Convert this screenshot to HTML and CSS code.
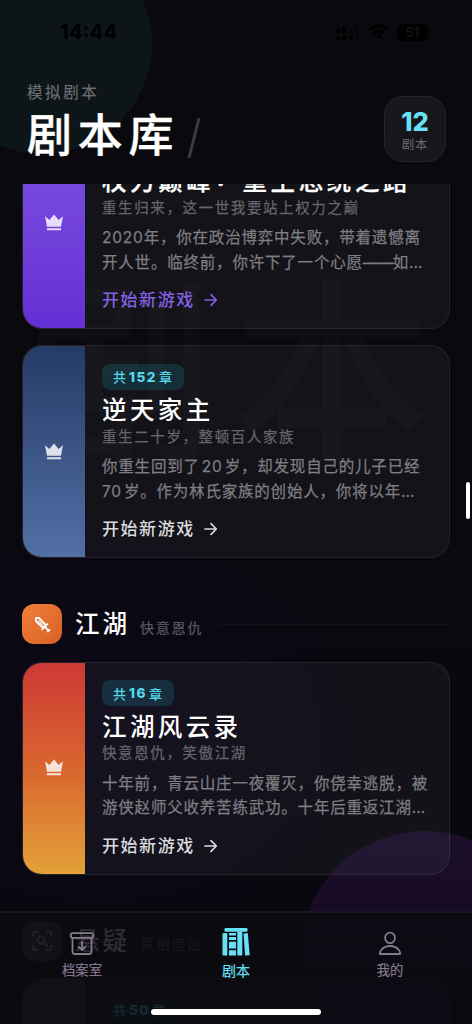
FILE: index.html
```html
<!DOCTYPE html>
<html lang="zh-CN">
<head>
<meta charset="utf-8">
<meta name="viewport" content="width=device-width, initial-scale=1">
<title>剧本库</title>
<link rel="stylesheet" href="styles.css">
</head>
<body>
<svg class="sprite" aria-hidden="true">
  <symbol id="crown" viewBox="0 0 20 18"><path d="M1 2.2 5.4 6.1 10 .6l4.6 5.5L19 2.2 17 12.7H3zM3 14.3h14v2H3z" fill="currentColor"/></symbol>
  <symbol id="arrow" viewBox="0 0 14 14"><path d="M1 7h11M7 1.7 12.3 7 7 12.3" fill="none" stroke="currentColor" stroke-width="1.7" stroke-linecap="round" stroke-linejoin="round"/></symbol>
</svg>
<div class="screen">
  <div class="orb orb-teal"></div>
  <div class="orb orb-purple"></div>
  <div class="watermark">剧本</div>

  <div class="statusbar">
    <span class="clock">14:44</span>
    <div class="status-icons">
      <svg class="signal" viewBox="0 0 28 16"><g fill="#000"><rect x="3" y="5" width="4" height="4"/><rect x="9" y="3" width="4" height="6"/><rect x="3" y="12" width="4" height="4"/><rect x="9" y="12" width="4" height="4"/><rect x="16" y="12" width="4" height="4"/><rect x="22" y="12" width="3" height="4" opacity=".35"/><rect x="16" y="4" width="3" height="6" opacity=".35"/><rect x="22" y="1" width="3" height="9" opacity=".35"/></g></svg>
      <svg class="wifi" viewBox="0 0 20 16"><g fill="none" stroke="#000" stroke-width="2.6"><path d="M1 5.5Q10-2.4 19 5.5M4.5 9.3Q10 4.5 15.5 9.3"/></g><path d="M7 11.7Q10 9.5 13 11.7L10 15z" fill="#000"/></svg>
      <span class="battery">51</span>
    </div>
  </div>

  <header class="header">
    <div class="heading">
      <div class="eyebrow">模拟剧本</div>
      <h1 class="page-title">剧本库<svg class="slash" viewBox="0 0 14 42"><path d="M12 1 2 41" stroke="#3b3b40" stroke-width="3"/></svg></h1>
    </div>
    <div class="counter"><b class="counter-num">12</b><span class="counter-label">剧本</span></div>
  </header>

  <main class="list">
    <article class="card card-first">
      <div class="spine spine-violet"><svg class="crown"><use href="#crown"/></svg></div>
      <div class="body">
        <h2 class="title">权力巅峰<span class="colon">：</span>重生总统之路</h2>
        <p class="subtitle">重生归来，这一世我要站上权力之巅</p>
        <p class="desc"><span>2020年，你在政治博弈中失败，带着遗憾离</span><span>开人世。临终前，你许下了一个心愿<b class="dash">——</b>如…</span></p>
        <div class="cta cta-violet">开始新游戏<svg class="arrow"><use href="#arrow"/></svg></div>
      </div>
    </article>

    <article class="card">
      <div class="spine spine-blue"><svg class="crown"><use href="#crown"/></svg></div>
      <div class="body">
        <span class="badge">共<b>152</b>章</span>
        <h2 class="title">逆天家主</h2>
        <p class="subtitle">重生二十岁，整顿百人家族</p>
        <p class="desc"><span>你重生回到了<i class="num">20</i>岁，却发现自己的儿子已经</span><span><i class="num num-start">70</i>岁。作为林氏家族的创始人，你将以年…</span></p>
        <div class="cta">开始新游戏<svg class="arrow"><use href="#arrow"/></svg></div>
      </div>
    </article>

    <div class="section">
      <span class="section-icon sword"><svg viewBox="0 0 20 20" class="glyph"><path d="M2.4 2.4h3.8l7.6 8-3.4 3.4-8-7.6z" fill="none" stroke="#fff" stroke-width="2.2" stroke-linejoin="round"/><path d="m5.5 5.5 5 5" stroke="#fff" stroke-width="1.5"/><path d="m9 16.4 7.4-7.4M13.4 13.4l3.8 3.8" stroke="#fff" stroke-width="2.2"/><path d="m18.8 15.6-3.2 3.2" stroke="#fff" stroke-width="2.2"/></svg></span>
      <h3 class="section-title">江湖</h3>
      <span class="section-note">快意恩仇</span>
      <span class="rule"></span>
    </div>

    <article class="card">
      <div class="spine spine-fire"><svg class="crown"><use href="#crown"/></svg></div>
      <div class="body">
        <span class="badge">共<b>16</b>章</span>
        <h2 class="title">江湖风云录</h2>
        <p class="subtitle">快意恩仇，笑傲江湖</p>
        <p class="desc"><span>十年前，青云山庄一夜覆灭，你侥幸逃脱，被</span><span>游侠赵师父收养苦练武功。十年后重返江湖…</span></p>
        <div class="cta">开始新游戏<svg class="arrow"><use href="#arrow"/></svg></div>
      </div>
    </article>

    <div class="section section-last">
      <span class="section-icon scan"><svg viewBox="0 0 20 20" class="glyph-scan"><path d="M1 6V3q0-2 2-2h3M14 1h3q2 0 2 2v3M19 14v3q0 2-2 2h-3M6 19H3q-2 0-2-2v-3M11.5 11.5l4 4" fill="none" stroke="#aaa" stroke-width="2"/><circle cx="9" cy="9" r="3.4" fill="none" stroke="#aaa" stroke-width="2"/></svg></span>
      <h3 class="section-title">悬疑</h3>
      <span class="section-note">真相追凶</span>
      <span class="rule"></span>
    </div>

    <article class="card">
      <div class="spine spine-grey"></div>
      <div class="body"><span class="badge">共<b>50</b>章</span></div>
    </article>
  </main>

  <i class="scroll-thumb"></i>

  <nav class="tabbar">
    <a class="tab">
      <svg class="tab-icon" viewBox="0 0 28 28"><g fill="none" stroke="currentColor" stroke-width="1.8" stroke-linecap="round" stroke-linejoin="round"><rect x="2.8" y="3.2" width="22.4" height="4.6" rx="1.5"/><path d="M4.5 8V21.5q0 2.5 2.5 2.5h14q2.5 0 2.5-2.5V8M14 12v8M10.5 16.8 14 20.2l3.5-3.4"/></g></svg>
      <span>档案室</span>
    </a>
    <a class="tab tab-active">
      <svg class="tab-icon books" viewBox="0 0 30 30"><g fill="currentColor"><rect x="3.5" y="1" width="23" height="3.8" rx="1"/><rect x="1.5" y="6" width="4.8" height="22.5" rx="1"/><path d="M8 6h7v2.4H8zM8 10h7v3H8zM8 14.8h7v6.7H8zM8 23.3h7v5.2H8z"/><rect x="16.3" y="4.5" width="5" height="24" rx=".7"/><path d="m22.5 6.7 4.3-.7 1.9 22.2-4.6.4z"/></g></svg>
      <span>剧本</span>
    </a>
    <a class="tab">
      <svg class="tab-icon" viewBox="0 0 28 28"><g fill="none" stroke="currentColor" stroke-width="1.8" stroke-linejoin="round"><ellipse cx="14" cy="7.9" rx="4.9" ry="5.3"/><path d="M3.8 24h20.4q.3-2-1.8-4.5Q19 16 14 16t-8.4 3.5Q3.5 22 3.8 24z"/></g></svg>
      <span>我的</span>
    </a>
  </nav>
  <i class="home-indicator"></i>
</div>
</body>
</html>
```
FILE: styles.css
```css
* { box-sizing: border-box; margin: 0; padding: 0; }
body {
  background: #09090e;
  font-family: Inter, "Noto Sans CJK SC", sans-serif;
  text-autospace: no-autospace;
}
i { font-style: normal; }
.sprite { display: none; }
.screen {
  position: relative;
  width: 472px;
  height: 1024px;
  overflow: hidden;
  display: flex;
  flex-direction: column;
  color: #fff;
  white-space: nowrap;
  background: radial-gradient(ellipse 330px 260px at 100px 730px, #0c0817, transparent), linear-gradient(#09090e, #08080e);
}

/* decorative backdrop */
.orb { position: absolute; border-radius: 50%; }
.orb-teal { left: -68px; top: -66px; width: 220px; height: 220px; background: #0d1518; }
.orb-purple { left: 300px; top: 831px; width: 250px; height: 250px; background: linear-gradient(#1a0e2a, #160922 60%); }
.watermark {
  position: absolute;
  left: 17px;
  top: 229px;
  font-size: 198px;
  line-height: 290px;
  letter-spacing: 18px;
  font-weight: 500;
  color: rgba(255, 255, 255, .02);
}

/* status bar */
.statusbar {
  position: relative;
  height: 64px;
  padding: 20px 41px 0 60px;
  display: flex;
  justify-content: space-between;
  color: #000;
}
.clock { font-size: 20.5px; line-height: 24px; font-weight: 700; }
.status-icons { display: flex; align-items: center; gap: 8px; height: 24px; }
.signal { width: 28px; height: 16px; }
.wifi { width: 20px; height: 16px; }
.battery {
  width: 31px;
  height: 17px;
  margin-right: 3px;
  border-radius: 6px;
  background: #000;
  color: #131318;
  font-size: 13px;
  line-height: 17px;
  font-weight: 700;
  text-align: center;
}

/* page header */
.header {
  position: relative;
  height: 120px;
  padding: 18px 26px 0 27px;
  display: flex;
  justify-content: space-between;
}
.eyebrow { font-size: 15.5px; line-height: 22px; letter-spacing: 2.6px; color: #6c6f72; -webkit-text-stroke: .2px #6c6f72; }
.page-title {
  display: flex;
  align-items: center;
  font-size: 45px;
  line-height: 63px;
  letter-spacing: 5.8px;
  font-weight: 500;
  -webkit-text-stroke: .4px #fff;
}
.slash { width: 14px; height: 42px; margin: 5px 0 0 8px; }
.counter {
  width: 62px;
  height: 66px;
  margin-top: 14px;
  padding-top: 12px;
  border: 1px solid #25252b;
  border-radius: 19px;
  background: #16161b;
  text-align: center;
}
.counter-num { display: block; font-size: 25.5px; line-height: 26px; font-weight: 800; color: #67e3f9; }
.counter-label { display: block; font-size: 12.5px; line-height: 20px; letter-spacing: .8px; color: #6b6b70; }

/* script list, scrolled part-way through the first card */
.list { position: relative; flex: 1; overflow: hidden; padding: 0 22px; }
.card {
  position: relative;
  height: 213px;
  display: flex;
  overflow: hidden;
  border: 1px solid rgba(255, 255, 255, .07);
  border-radius: 20px;
  background: rgba(255, 255, 255, .045);
}
.card-first { margin: -67.7px 0 16px; }
.card-first .body { padding-top: 44.8px; }
.spine { width: 62px; flex: none; display: flex; align-items: center; justify-content: center; color: rgba(255, 255, 255, .82); }
.spine-violet { background: linear-gradient(#8054e2, #6430d4); }
.spine-blue { background: linear-gradient(#253b66, #526fa6); }
.spine-fire { background: linear-gradient(#cd3935, #d9662f 50%, #e3a138); }
.spine-grey { background: #34343a; }
.crown { width: 20px; height: 18px; }
.body { padding: 17.5px 0 0 17px; }
.badge {
  display: flex;
  align-items: center;
  width: max-content;
  height: 26px;
  padding: 0 11px;
  border-radius: 8px;
  background: rgba(34, 211, 238, .145);
  color: #57d9ee;
  font-size: 13px;
  font-weight: 500;
  letter-spacing: 1px;
}
.badge b { margin: 0 2px 0 2px; font-size: 13.5px; font-weight: 800; letter-spacing: 1.5px; }
.title { margin-top: 1.6px; font-size: 24.5px; line-height: 38px; letter-spacing: 3.4px; font-weight: 500; }
.card-first .title { margin-top: 0; letter-spacing: 3.6px; -webkit-text-stroke: .3px #fff; }
.colon { position: relative; top: -4px; }
.subtitle { margin-top: -3.5px; font-size: 14.5px; line-height: 22px; letter-spacing: 1.6px; color: #65656b; -webkit-text-stroke: .25px #65656b; }
.desc { margin-top: 7.5px; font-size: 15.5px; line-height: 24.5px; letter-spacing: .8px; color: #7e7e83; -webkit-text-stroke: .25px #7e7e83; }
.desc span { display: block; }
.dash { font-weight: 400; letter-spacing: 0; margin-right: -1px; }
.num { margin: 0 2px; }
.num-start { margin-left: 0; }
.cta { display: flex; align-items: center; margin-top: 12px; font-size: 17px; line-height: 26px; letter-spacing: 1.55px; font-weight: 500; color: #dadadd; }
.cta-violet { color: #8460e0; }
.arrow { width: 14px; height: 14px; margin-left: 9px; }

/* genre heading */
.section { display: flex; align-items: center; height: 40px; margin: 46px 0 17.5px; }
.section-icon { width: 40px; height: 40px; flex: none; border-radius: 12px; display: flex; align-items: center; justify-content: center; }
.sword { background: linear-gradient(135deg, #f0803a, #d95f24); }
.scan { background: #334148; }
.glyph { width: 17px; height: 17px; }
.glyph-scan { width: 20px; height: 20px; }
.section-title { margin-left: 13px; font-size: 24.5px; line-height: 36px; letter-spacing: 3px; font-weight: 500; }
.section-note { margin: 7px 0 0 10px; font-size: 14px; line-height: 20px; letter-spacing: 1.8px; color: #5c5a63; -webkit-text-stroke: .2px #5c5a63; }
.rule { flex: 1; height: 1px; margin: 1px 0 0 15px; background: #131219; }

.scroll-thumb { position: absolute; right: 2px; top: 482px; width: 4px; height: 37px; border-radius: 2px; background: #fff; }

/* bottom navigation overlays the list */
.tabbar {
  position: absolute;
  left: 0;
  bottom: 0;
  width: 472px;
  height: 113px;
  padding: 17px 5px 0;
  display: grid;
  grid-template-columns: repeat(3, 1fr);
  border-top: 2px solid #19181f;
  background: rgba(10, 10, 15, .86);
}
.tab { display: flex; flex-direction: column; align-items: center; color: #85798f; font-size: 13.3px; line-height: 20px; -webkit-text-stroke: .2px currentColor; }
.tab-icon { width: 28px; height: 28px; margin-bottom: 2px; }
.tab-active { margin-top: -3px; color: #66e0f6; font-size: 14px; }
.tab-active span { line-height: 22px; }
.books { width: 30px; height: 30px; margin-bottom: 3px; }
.home-indicator { position: absolute; left: 151px; top: 1009px; width: 170px; height: 6px; border-radius: 3px; background: #fff; }
```
